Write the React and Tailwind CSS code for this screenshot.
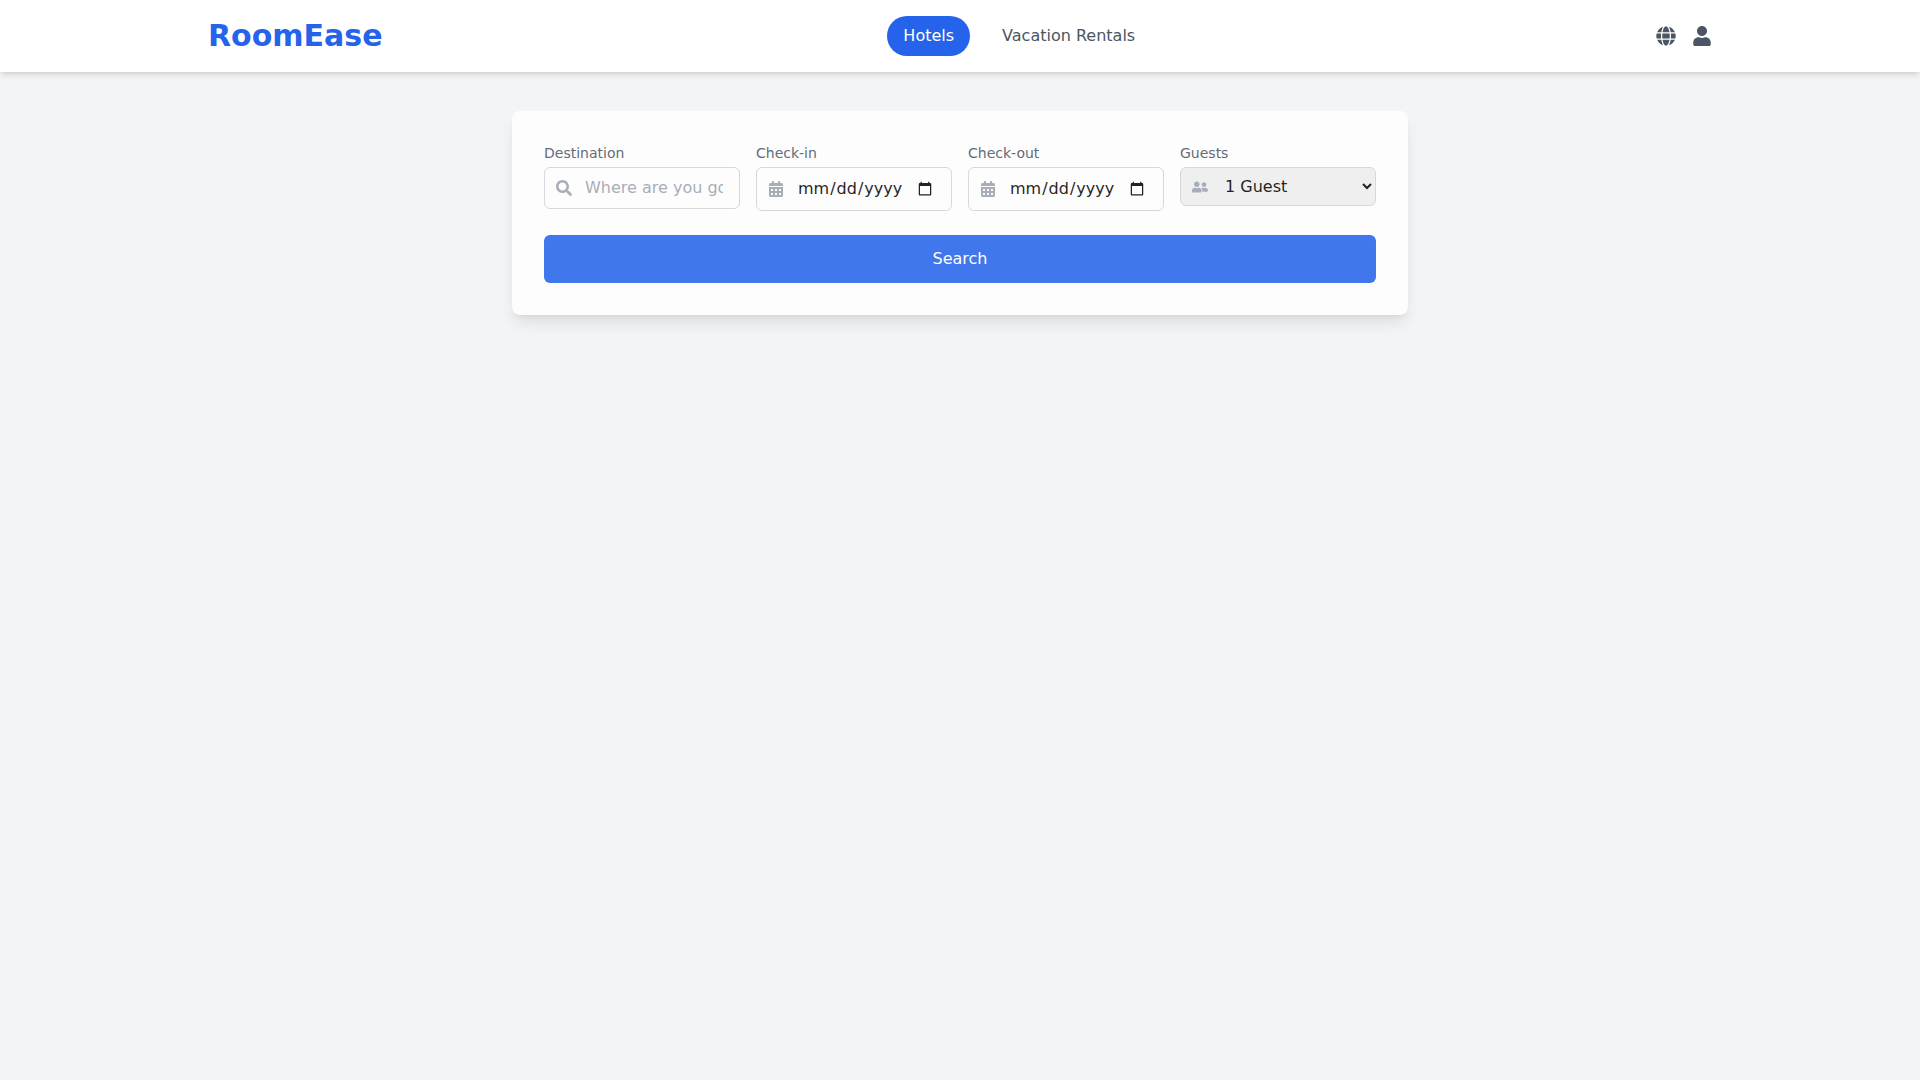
import { useState } from "react";
import { FaGlobe, FaUser, FaSearch, FaCalendarAlt, FaUserFriends } from "react-icons/fa";

function Field({ id, label, icon, children }) {
  return (
    <div>
      <label htmlFor={id} className="mb-1 block text-sm text-[#4b5563]">{label}</label>
      <div className="relative">
        {children}
        <span className="pointer-events-none absolute inset-y-0 left-3 flex items-center text-[#9ca3af]">{icon}</span>
      </div>
    </div>
  );
}

const control = "block w-full rounded-md border border-[#d1d5db] py-2 pr-4 pl-10 text-black placeholder:text-[#9ca3af]";

export default function App() {
  const [tab, setTab] = useState("Hotels");
  return (
    <div className="min-h-screen bg-[#f3f4f6] font-['DejaVu_Sans',sans-serif]">
      <header className="bg-white shadow-md">
        <div className="mx-auto flex max-w-[1536px] items-center justify-between px-4 py-4">
          <div className="text-3xl font-bold text-[#2563eb]">RoomEase</div>
          <nav className="flex gap-4">
            {["Hotels", "Vacation Rentals"].map((name) => (
              <button
                key={name}
                onClick={() => setTab(name)}
                className={tab === name ? "rounded-full bg-[#2563eb] px-4 py-2 text-white" : "rounded-full px-4 py-2 text-[#4b5563]"}
              >
                {name}
              </button>
            ))}
          </nav>
          <div className="flex gap-4 text-xl text-[#4b5563]">
            <button aria-label="Language"><FaGlobe /></button>
            <button aria-label="Account"><FaUser /></button>
          </div>
        </div>
      </header>
      <main className="px-4 pt-[39px] pb-10">
        <form className="mx-auto max-w-4xl rounded-lg bg-white p-8 opacity-[0.86] shadow-lg" onSubmit={(e) => e.preventDefault()}>
          <div className="grid grid-cols-4 items-start gap-4">
            <Field id="destination" label="Destination" icon={<FaSearch />}>
              <input id="destination" type="text" placeholder="Where are you going?" className={control} />
            </Field>
            <Field id="checkin" label="Check-in" icon={<FaCalendarAlt />}>
              <input id="checkin" type="date" className={`${control} h-11`} />
            </Field>
            <Field id="checkout" label="Check-out" icon={<FaCalendarAlt />}>
              <input id="checkout" type="date" className={`${control} h-11`} />
            </Field>
            <Field id="guests" label="Guests" icon={<FaUserFriends />}>
              <select id="guests" className={`${control} bg-[#efefef]`}>
                <option>1 Guest</option>
                <option>2 Guests</option>
                <option>3 Guests</option>
                <option>4 Guests</option>
              </select>
            </Field>
          </div>
          <button className="mt-6 block w-full rounded-md bg-[#2563eb] py-3 text-white">Search</button>
        </form>
      </main>
    </div>
  );
}
